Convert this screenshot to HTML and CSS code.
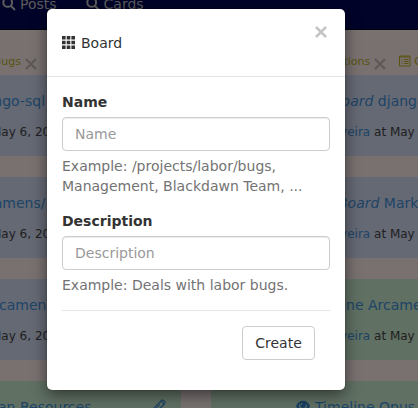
FILE: index.html
```html
<!DOCTYPE html>
<html lang="en">
<head>
<meta charset="utf-8">
<title>Board</title>
<link rel="stylesheet" href="styles.css">
</head>
<body>
<div class="page">
  <nav class="navbar">
    <span class="nav-item"><svg class="search" viewBox="0 0 14 14"><circle cx="5.7" cy="5.4" r="4.4"/><path d="M9 9l4 4"/></svg>Posts</span>
    <span class="nav-item"><svg class="search" viewBox="0 0 14 14"><circle cx="5.7" cy="5.4" r="4.4"/><path d="M9 9l4 4"/></svg>Cards</span>
  </nav>
  <div class="columns">
    <section class="column left">
      <header class="list-head"><span class="list-name">Bugs</span><svg class="remove" viewBox="0 0 12 12"><path d="M1 1l10 10M11 1L1 11"/></svg></header>
      <article class="card"><div class="title t1">django-sql</div><div class="meta">May 6, 2016</div></article>
      <article class="card"><div class="title t2">Arcamens/</div><div class="meta">May 6, 2016</div></article>
      <article class="card"><div class="title t3">Arcamens</div><div class="meta">May 6, 2016</div></article>
      <article class="card green"><div class="title t4">Human Resources<svg class="clip" viewBox="0 0 16 16"><path d="M2 11L9.500 3.500c2.200-2.200 5.200.6 3.100 2.900L6.500 12.600c-1.500 1.400-3.300-.4-2-1.800L10 5.300M2 11c-2 2.400 1 5.300 3.400 3.200L14 5.600c2.400-2.600-.8-6-3.500-3.500"/></svg></div></article>
    </section>
    <section class="column right">
      <header class="list-head"><span class="list-name">Actions</span><svg class="remove" viewBox="0 0 12 12"><path d="M1 1l10 10M11 1L1 11"/></svg><svg class="list-icon" viewBox="0 0 12 12"><path d="M.5 1h10.500v10H.5zM.5 2h10.500M2.500 4.500h1M5 4.500h4.500M2.500 6.500h1M5 6.500h4.500M2.500 8.500h1M5 8.500h4.500"/></svg><span>Cards</span></header>
      <article class="card"><div class="title b1"><em>Board</em> django</div><div class="meta"><a>Oliveira</a> at May 6</div></article>
      <article class="card"><div class="title b2"><em>Board</em> Market</div><div class="meta"><a>Oliveira</a> at May 6</div></article>
      <article class="card green"><div class="title b3">Timeline Arcamens</div><div class="meta"><a>Oliveira</a> at May 6</div></article>
      <article class="card green"><div class="title b4"><svg class="eye" viewBox="0 0 14 12"><path class="fill" d="M0 6C3-1 11-1 14 6c-3 7-11 7-14 0z"/><path class="ring" d="M3.500 4.500c0 5.500 7 5.500 7 0M6 3.200q-1 .4-1 1.800"/></svg>Timeline Opus</div></article>
    </section>
  </div>
</div>
<div class="modal">
  <header class="modal-head">
    <svg class="grid-icon" viewBox="0 0 13 13"><path d="M0 0h3.600v3.600H0zM4.700 0h3.600v3.600H4.700zM9.400 0H13v3.600H9.400zM0 4.700h3.600v3.600H0zM4.700 4.700h3.600v3.600H4.700zM9.400 4.700H13v3.600H9.400zM0 9.400h3.600V13H0zM4.700 9.400h3.600V13H4.700zM9.400 9.400H13V13H9.400z"/></svg>
    <span>Board</span>
    <svg class="close" viewBox="0 0 12 12"><path d="M1 1l10 10M11 1L1 11"/></svg>
  </header>
  <form class="modal-body">
    <label for="name">Name</label>
    <input id="name" type="text" placeholder="Name">
    <p class="help">Example: /projects/labor/bugs, Management, Blackdawn Team, ...</p>
    <label for="desc">Description</label>
    <input id="desc" type="text" placeholder="Description">
    <p class="help">Example: Deals with labor bugs.</p>
    <div class="actions"><button type="button">Create</button></div>
  </form>
</div>
</body>
</html>
```
FILE: styles.css
```css
* { box-sizing: border-box; }
body {
  margin: 0;
  width: 418px;
  height: 408px;
  overflow: hidden;
  font: 14px/20px "DejaVu Sans", sans-serif;
  color: #333;
}
svg { flex: none; fill: none; }
.page { height: 408px; overflow: hidden; background: #787170; white-space: nowrap; }
.navbar {
  display: flex;
  gap: 29px;
  height: 30px;
  padding-left: 2px;
  background: #010329;
  border-bottom: 1px solid #00010f;
  color: #5c5c5c;
}
.nav-item { display: flex; height: 20px; margin-top: -6px; align-items: center; }
.search { width: 14px; height: 14px; margin: -1px 4px 0 0; stroke: #5c5c5c; stroke-width: 2; }
.columns { display: grid; grid-template-columns: 181px 207px; column-gap: 30px; }
.column { overflow: hidden; }
.list-head {
  display: flex;
  align-items: center;
  height: 45px;
  padding-top: 18px;
  font-size: 11px;
  color: #5a5210;
}
.left .list-head { margin-left: -8px; }
.right .list-head { padding-left: 119px; }
.list-name { width: 41px; text-align: right; }
.left .list-name { display: flex; justify-content: flex-end; width: 29px; }
.remove { width: 12px; height: 12px; margin: 5px 0 0 4px; stroke: #5d5856; stroke-width: 2.2; }
.list-icon { width: 12px; height: 12px; margin: -1px 3px 0 13px; stroke: #5a5210; }
.card { height: 81px; margin-bottom: 21px; padding-top: 16px; background: #656974; }
.green { background: #607063; }
.title { display: flex; align-items: center; height: 20px; color: #1d4467; white-space: pre; }
.meta { margin-top: 11px; font-size: 12px; color: #202020; }
.meta a { color: #1d4467; }
.left .meta { margin-left: -9px; }
.right .meta { padding-left: 113px; }
.t1 { margin-left: -28px; }
.t2 { margin-left: -29px; }
.t3 { margin-left: -16px; }
.t4 { margin-left: -35px; }
.b1 { padding-left: 121px; }
.b2 { padding-left: 127px; }
.b3 { padding-left: 93px; }
.b4 { padding-left: 85px; }
.clip { width: 16px; height: 16px; margin-left: 59px; stroke: #1d4467; stroke-width: 1.1; }
.eye { width: 14px; height: 12px; margin: -3px 5px 0 0; }
.eye .fill { fill: #173f62; }
.eye .ring { stroke: #607063; stroke-width: 1.2; }
.modal {
  position: absolute;
  left: 47px;
  top: 9px;
  width: 298px;
  height: 381px;
  background: #fff;
  border-radius: 5px;
  box-shadow: 0 5px 15px rgba(0, 0, 0, .5), 0 0 1px rgba(0, 0, 0, .6);
}
.modal-head {
  display: flex;
  align-items: center;
  height: 68px;
  padding: 0 17px 0 15px;
  border-bottom: 1px solid #e5e5e5;
}
.grid-icon { width: 13px; height: 13px; margin-right: 6px; fill: #333; }
.close { width: 12px; height: 12px; margin: -21px 1px 0 auto; stroke: #c4c4c4; stroke-width: 2.5; }
.modal-body { padding: 15px; }
label { display: block; margin-bottom: 5px; font-weight: 700; }
input {
  display: block;
  width: 100%;
  height: 34px;
  padding: 6px 12px;
  border: 1px solid #ccc;
  border-radius: 4px;
  box-shadow: inset 0 1px 1px rgba(0, 0, 0, .075);
  font: inherit;
}
input::placeholder { color: #999; opacity: 1; }
.help { margin: 5px 0 15px; color: #737373; }
.actions { display: flex; justify-content: flex-end; padding: 15px 15px 0; border-top: 1px solid #e5e5e5; }
button {
  width: 73px;
  height: 34px;
  padding: 0;
  border: 1px solid #ccc;
  border-radius: 4px;
  background: #fff;
  color: #333;
  font: inherit;
}
```
